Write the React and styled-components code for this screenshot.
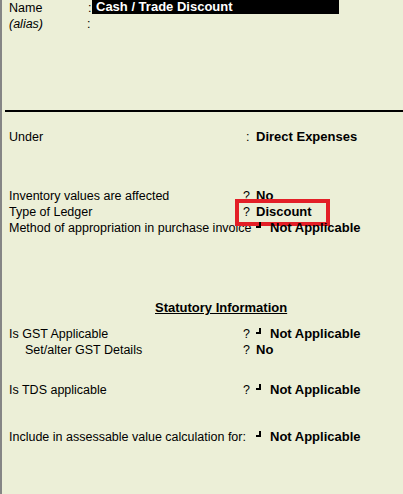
import React from 'react'
import styled, { createGlobalStyle } from 'styled-components'

const GlobalStyle = createGlobalStyle`
    html, body {
        margin: 0;
        padding: 0;
        background: #ecefd7;
    }
`

const Screen = styled.div`
    min-height: 494px;
    box-sizing: border-box;
    border-left: 2px solid #858585;
    padding-left: 7px;
    background: #ecefd7;
    font-family: "Liberation Sans", Arial, sans-serif;
    font-size: 12.5px;
    line-height: 16px;
    color: #000;
`

const Section = styled.div`
    margin-top: ${(props) => props.gap || 0}px;
`

const Row = styled.div`
    display: flex;
    align-items: baseline;
    height: 16px;
    white-space: nowrap;
    padding-left: ${(props) => props.indent || 0}px;
`

const Label = styled.span`
    width: ${(props) => props.width || 234}px;
    flex-shrink: 0;
    font-style: ${(props) => (props.italic ? 'italic' : 'normal')};
`

const Group = styled.span`
    position: relative;
    display: flex;
    align-items: baseline;
`

const Sep = styled.span`
    width: 13px;
    flex-shrink: 0;
    padding-left: ${(props) => props.pad || 0}px;
    box-sizing: border-box;
`

const Corner = styled.span`
    display: inline-block;
    width: 5px;
    height: 6px;
    border-right: 2px solid #000;
    border-bottom: 2px solid #000;
    box-sizing: border-box;
    margin-right: 9px;
    transform: translateY(-4px);
`

const Value = styled.span`
    font-weight: bold;
    font-size: 13px;
`

const NameBox = styled.span`
    width: 247px;
    height: 15px;
    line-height: 15px;
    margin-top: -1px;
    align-self: flex-start;
    background: #000;
    color: #fff;
    font-weight: bold;
    font-size: 13px;
    padding-left: 4px;
    box-sizing: border-box;
`

const Colon = styled.span`
    width: 4px;
    flex-shrink: 0;
`

const Divider = styled.hr`
    margin: 78px 0 0 -4px;
    border: none;
    height: 2px;
    background: #000;
`

const Heading = styled.div`
    margin-left: 146px;
    font-weight: bold;
    font-size: 13px;
    text-decoration: underline;
    height: 16px;
`

const Highlight = styled.span`
    position: absolute;
    left: -8px;
    top: -5px;
    width: 95px;
    height: 27px;
    border: 4px solid #e31f27;
    box-sizing: border-box;
    pointer-events: none;
`

const Field = ({ label, value, sep = '?', corner, indent, marked, labelWidth }) => (
    <Row indent={indent}>
        <Label width={labelWidth}>{label}</Label>
        <Group>
            <Sep pad={sep === ':' ? 3 : 0}>{sep}</Sep>
            {corner && <Corner />}
            <Value>{value}</Value>
            {marked && <Highlight />}
        </Group>
    </Row>
)

const App = () => {
    return (
        <>
            <GlobalStyle />
            <Screen>
                <Row>
                    <Label width={79}>Name</Label>
                    <Colon>:</Colon>
                    <NameBox>Cash / Trade Discount</NameBox>
                </Row>
                <Row>
                    <Label width={78} italic>(alias)</Label>
                    <Colon>:</Colon>
                </Row>

                <Divider />

                <Section gap={17}>
                    <Field label="Under" sep=":" value="Direct Expenses" />
                </Section>

                <Section gap={43}>
                    <Field label="Inventory values are affected" value="No" />
                    <Field label="Type of Ledger" value="Discount" marked />
                    <Field label="Method of appropriation in purchase invoice" sep="" corner value="Not Applicable" />
                </Section>

                <Section gap={64}>
                    <Heading>Statutory Information</Heading>
                </Section>

                <Section gap={10}>
                    <Field label="Is GST Applicable" corner value="Not Applicable" />
                    <Field label="Set/alter GST Details" indent={16} labelWidth={218} value="No" />
                </Section>

                <Section gap={24}>
                    <Field label="Is TDS applicable" corner value="Not Applicable" />
                </Section>

                <Section gap={31}>
                    <Field label="Include in assessable value calculation for:" sep="" corner value="Not Applicable" />
                </Section>
            </Screen>
        </>
    )
}

export default App
